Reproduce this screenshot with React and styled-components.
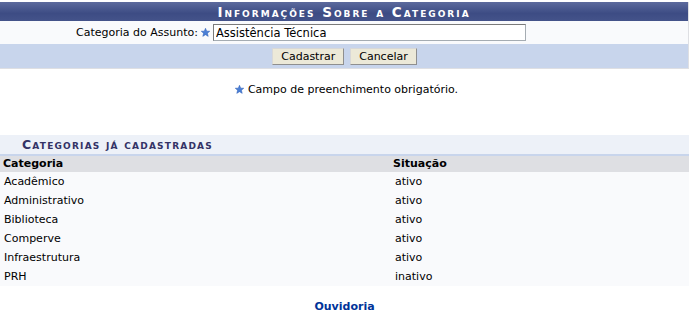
import React from 'react';
import styled, { createGlobalStyle } from 'styled-components';

const Global = createGlobalStyle`
  body {
    margin: 0;
    background: #fff;
    font-family: "DejaVu Sans", Verdana, sans-serif;
    font-size: 11px;
    color: #000;
  }
`;

const Page = styled.div`
  width: 689px;
  padding-top: 2px;
`;

const FormBox = styled.div`
  border: 1px solid #dedfe3;
  border-top: none;
  border-left: none;
`;

const Caption = styled.div`
  height: 19px;
  display: flex;
  align-items: center;
  justify-content: center;
  background: linear-gradient(#5c6a9d 0%, #44538a 45%, #3d4c84 60%, #44538a 100%);
  color: #fff;
  font-weight: bold;
  font-size: 13.5px;
  font-variant: small-caps;
  letter-spacing: 2px;
`;

const FieldRow = styled.div`
  height: 23px;
  background: #f9fafc;
  display: grid;
  grid-template-columns: 199px auto 1fr;
  align-items: center;
`;

const Label = styled.label`
  text-align: right;
  padding-right: 1px;
`;

const Req = styled.span`
  display: inline-flex;
  width: 13px;
  justify-content: center;
  align-items: center;
`;

const TextInput = styled.input`
  width: 313px;
  height: 17px;
  box-sizing: border-box;
  border: 1px solid #a5acb2;
  border-top-color: #7a7a7a;
  border-left-color: #7a7a7a;
  padding: 0 2px;
  font-family: "DejaVu Sans", Verdana, sans-serif;
  font-size: 11.5px;
  margin: 0 0 0 1px;
`;

const ButtonRow = styled.div`
  height: 24px;
  background: #c8d5ec;
  display: flex;
  justify-content: center;
  align-items: center;
  gap: 6px;
  padding-left: 1px;
`;

const Button = styled.button`
  height: 17px;
  padding: 0 8px;
  background: #ece9d8;
  border: 1px solid #8f8f8f;
  border-top-color: #d8d8d8;
  border-left-color: #d8d8d8;
  font-family: "DejaVu Sans", Verdana, sans-serif;
  font-size: 11px;
  color: #000;
  line-height: 15px;
`;

const Note = styled.p`
  margin: 13px 0 0;
  height: 14px;
  display: flex;
  justify-content: center;
  align-items: center;
  gap: 4px;
  font-size: 11px;
  padding-left: 4px;
`;

const Listing = styled.div`
  margin-top: 39px;
`;

const ListTitle = styled.div`
  height: 19px;
  background: #edf1f8;
  border-bottom: 2px solid #c8d5ec;
  display: flex;
  align-items: center;
  padding-left: 22px;
  color: #333366;
  font-weight: bold;
  font-size: 12.5px;
  font-variant: small-caps;
  letter-spacing: 1.2px;
`;

const Grid = styled.div`
  display: grid;
  grid-template-columns: 393px 1fr;
`;

const HeadCell = styled.div`
  height: 16px;
  line-height: 16px;
  background: #dedfe3;
  font-weight: bold;
  padding-left: ${p => (p.first ? '3px' : '0')};
`;

const Cell = styled.div`
  height: 19px;
  line-height: 19px;
  background: #f9fafc;
  padding-left: ${p => (p.first ? '4px' : '2px')};
  font-size: 11px;
`;

const Footer = styled.div`
  margin-top: 14px;
  text-align: center;
  font-weight: bold;
  color: #003399;
  font-size: 11px;
`;

function Star() {
  return (
    <svg width="9" height="9" viewBox="0 0 10 10">
      <path
        d="M5 0.3 L6.3 3.5 L9.7 3.6 L7.1 5.8 L8 9.3 L5 7.4 L2 9.3 L2.9 5.8 L0.3 3.6 L3.7 3.5 Z"
        fill="#4a7fd6"
        stroke="#2d5fb8"
        strokeWidth="0.6"
      />
    </svg>
  );
}

const rows = [
  ['Acadêmico', 'ativo'],
  ['Administrativo', 'ativo'],
  ['Biblioteca', 'ativo'],
  ['Comperve', 'ativo'],
  ['Infraestrutura', 'ativo'],
  ['PRH', 'inativo'],
];

export default function App() {
  return (
    <Page>
      <Global />
      <FormBox>
        <Caption>Informações Sobre a Categoria</Caption>
        <FieldRow>
          <Label>Categoria do Assunto:</Label>
          <span>
            <Req><Star /></Req>
            <TextInput defaultValue="Assistência Técnica" />
          </span>
          <span />
        </FieldRow>
        <ButtonRow>
          <Button>Cadastrar</Button>
          <Button>Cancelar</Button>
        </ButtonRow>
      </FormBox>

      <Note>
        <Star />
        <span>Campo de preenchimento obrigatório.</span>
      </Note>

      <Listing>
        <ListTitle>Categorias já cadastradas</ListTitle>
        <Grid>
          <HeadCell first>Categoria</HeadCell>
          <HeadCell>Situação</HeadCell>
          {rows.map(([nome, sit]) => (
            <React.Fragment key={nome}>
              <Cell first>{nome}</Cell>
              <Cell>{sit}</Cell>
            </React.Fragment>
          ))}
        </Grid>
      </Listing>

      <Footer>Ouvidoria</Footer>
    </Page>
  );
}
